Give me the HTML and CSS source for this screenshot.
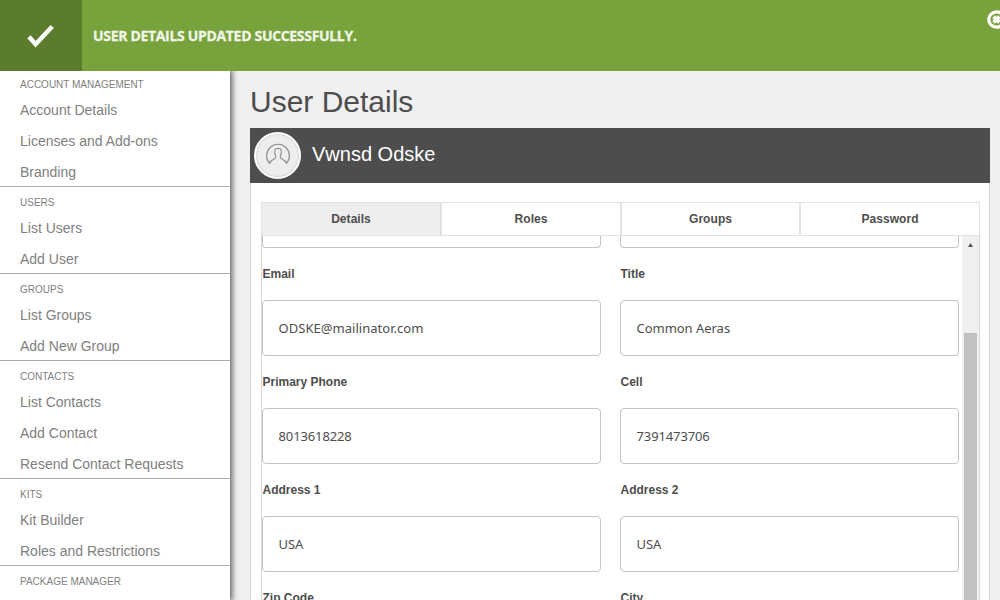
FILE: index.html
```html
<!DOCTYPE html>
<html lang="en">
<head>
<meta charset="utf-8">
<title>User Details</title>
<link rel="stylesheet" href="styles.css">
</head>
<body>
<div class="page">
  <header class="alert">
    <div class="alert-icon">
      <svg width="28" height="24" viewBox="0 0 28 24"><path d="M2 12.8 8.6 20.2 25.2 2.6" fill="none" stroke="#fff" stroke-width="4.4"/></svg>
    </div>
    <p class="alert-text"><span>USER DETAILS UPDATED SUCCESSFULLY.</span></p>
    <svg class="alert-close" width="19" height="19" viewBox="0 0 19 19"><circle cx="9.5" cy="9.5" r="7.7" fill="none" stroke="#fff" stroke-width="3.2"/><path d="M6.6 6.6l5.8 5.8M12.4 6.6l-5.8 5.8" stroke="#fff" stroke-width="3.8"/></svg>
  </header>
  <div class="layout">
    <nav class="sidebar">
      <section class="group"><h2>ACCOUNT MANAGEMENT</h2><a>Account Details</a><a>Licenses and Add-ons</a><a>Branding</a></section>
      <section class="group"><h2>USERS</h2><a>List Users</a><a>Add User</a></section>
      <section class="group"><h2>GROUPS</h2><a>List Groups</a><a>Add New Group</a></section>
      <section class="group"><h2>CONTACTS</h2><a>List Contacts</a><a>Add Contact</a><a>Resend Contact Requests</a></section>
      <section class="group"><h2>KITS</h2><a>Kit Builder</a><a>Roles and Restrictions</a></section>
      <section class="group"><h2>PACKAGE MANAGER</h2></section>
    </nav>
    <main class="content">
      <h1>User Details</h1>
      <div class="panel-head">
        <div class="avatar">
          <svg width="26" height="24" viewBox="0 0 26 24" fill="none" stroke="#8c8c8c" stroke-width="1.1"><path d="M4.500 20.300A11.400 11.400 0 1 1 21.500 20.300C20.500 17.300 18 16.500 15.300 15V12.800C16.800 11 16.500 9 16.100 6.800C15.500 4.900 10.500 4.900 9.900 6.800C9.500 9 9.200 11 10.700 12.800V15C8 16.500 5.500 17.300 4.500 20.300Z"/></svg>
        </div>
        <span class="name">Vwnsd Odske</span>
      </div>
      <div class="panel">
        <div class="tabs">
          <div class="tab active">Details</div><div class="tab">Roles</div><div class="tab">Groups</div><div class="tab">Password</div>
        </div>
        <div class="scroll-area">
          <div class="fields">
            <div class="box cut"></div><div class="box cut"></div>
            <div class="field"><label>Email</label><div class="box"><span class="email">ODSKE@mailinator.com</span></div></div>
            <div class="field"><label>Title</label><div class="box">Common Aeras</div></div>
            <div class="field"><label>Primary Phone</label><div class="box number">8013618228</div></div>
            <div class="field"><label>Cell</label><div class="box number">7391473706</div></div>
            <div class="field"><label>Address 1</label><div class="box">USA</div></div>
            <div class="field"><label>Address 2</label><div class="box">USA</div></div>
            <div class="field"><label>Zip Code</label></div>
            <div class="field"><label>City</label></div>
          </div>
          <div class="scrollbar">
            <svg width="17" height="17" viewBox="0 0 17 17"><path d="M6 11 8.500 7 11 11Z" fill="#505050"/></svg>
            <div class="thumb"></div>
          </div>
        </div>
      </div>
    </main>
  </div>
</div>
</body>
</html>
```
FILE: styles.css
```css
* { box-sizing: border-box; }
body { margin: 0; background: #f0f0f0; font-family: "Liberation Sans", Arial, sans-serif; color: #4d4d4d; overflow: hidden; }
h1, h2, p { margin: 0; font-weight: 400; }
.page { width: 1000px; height: 600px; overflow: hidden; display: flex; flex-direction: column; }
.alert { position: relative; z-index: 2; flex: none; height: 71px; background: #78a23b; display: flex; align-items: center; overflow: hidden; }
.alert-icon { width: 82px; height: 71px; background: #5b7c2d; display: flex; align-items: center; justify-content: center; }
.alert-text { flex: 1; padding: 1px 0 0 11px; font: 700 14px/20px "Open Sans", sans-serif; letter-spacing: -.32px; -webkit-text-stroke: .3px #f1f5ea; color: #f1f5ea; }
.alert-close { position: absolute; left: 987px; top: 10px; }
.layout { flex: 1; min-height: 0; display: flex; }
.sidebar { position: relative; width: 230px; flex: none; background: #fff; box-shadow: 1px 0 6px 1px #555; overflow: visible; }
.group { border-bottom: 1px solid #acacac; }
.group:last-child { border-bottom: 0; }
.group h2 { height: 24px; padding: 10px 0 0 20px; font-size: 10px; line-height: 12px; color: #808080; }
.group:first-child h2 { height: 22px; padding-top: 8px; }
.group a { display: block; height: 31px; padding: 2px 0 0 20px; font-size: 14px; line-height: 30px; color: #808080; }
.content { width: 740px; margin-left: 20px; display: flex; flex-direction: column; }
h1 { height: 57px; padding-top: 13px; font-size: 30px; line-height: 35px; }
.panel-head { flex: none; height: 55px; background: #4d4d4d; display: flex; align-items: center; padding-left: 4px; }
.avatar { width: 47px; height: 47px; border-radius: 50%; background: #eee; border: 2px solid #fff; box-shadow: inset 0 0 2px #aaa; display: flex; align-items: center; justify-content: center; padding-bottom: 2px; }
.name { margin-left: 11px; padding-bottom: 3px; font-size: 20px; color: #fff; }
.panel { flex: 1; min-height: 0; background: #fff; border: solid #d9d9d9; border-width: 0 1px; padding: 19px 9px 0 10px; display: flex; flex-direction: column; }
.tabs { flex: none; display: grid; grid-template-columns: 178px 180px 179px 180px; height: 34px; border: 1px solid #e2e2e2; }
.tab { text-align: center; font-size: 12px; font-weight: 700; line-height: 32px; letter-spacing: .05px; }
.tab + .tab { border-left: 2px solid #e2e2e2; }
.tab.active { background: #eee; }
.scroll-area { flex: 1; min-height: 0; overflow: hidden; display: flex; justify-content: space-between; border: solid #d9d9d9; border-width: 0 1px; }
.fields { display: grid; grid-template-columns: 339px 339px; column-gap: 19px; grid-template-rows: 12px 108px 108px 108px 52px; }
.field label { display: block; height: 52px; padding: 18px 0 0 .5px; font-size: 12px; line-height: 16px; font-weight: 700; }
.box { height: 56px; border: 1px solid #c4c4c4; border-radius: 4px; padding-left: 15.5px; font: 13px/54px "Noto Sans", sans-serif; letter-spacing: -.03px; }
.box.number { letter-spacing: -.12px; }
.email { letter-spacing: .04px; }
.box.cut { height: 12px; border-top: 0; border-radius: 0 0 4px 4px; }
.scrollbar { width: 17px; background: #f0f0f0; }
.scrollbar svg { display: block; }
.thumb { margin: 80px 2px 0; height: 300px; background: #c1c1c1; }
```
